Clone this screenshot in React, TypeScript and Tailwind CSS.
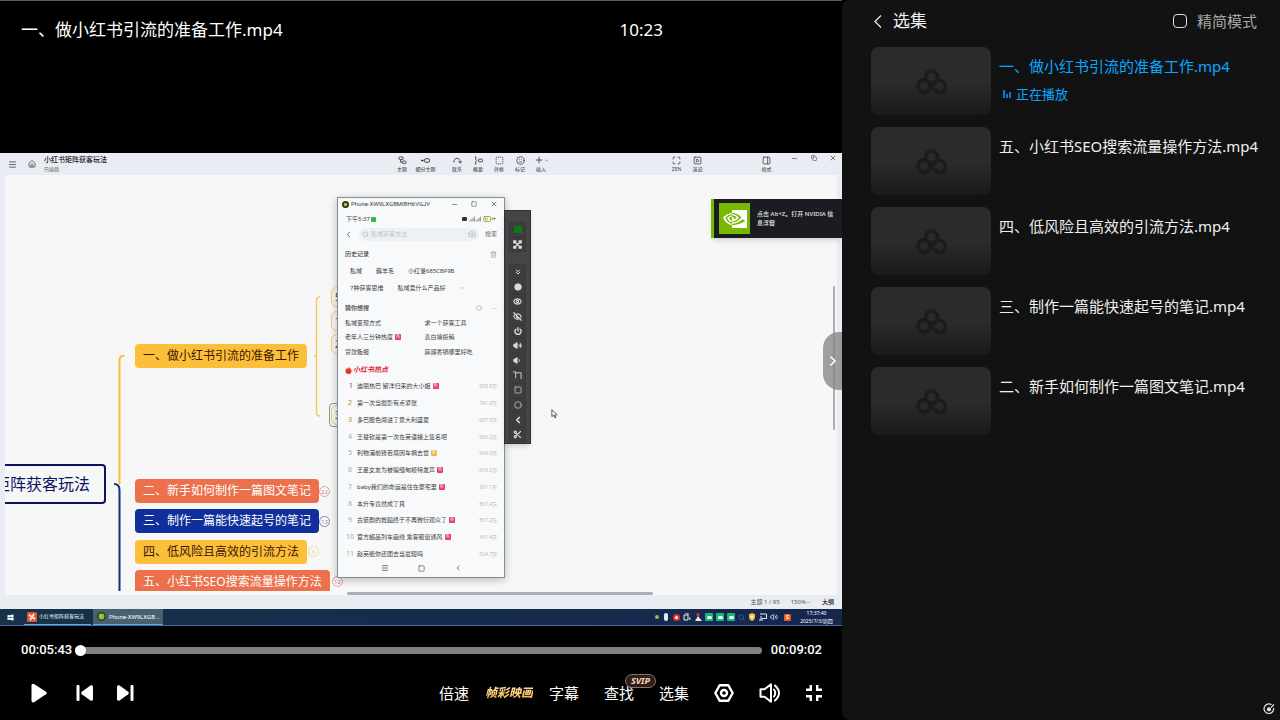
import type { ReactNode } from 'react';
import {
  BatteryMedium,
  Camera,
  ChevronDown,
  ChevronLeft,
  ChevronRight,
  ChevronsDown,
  Circle,
  Copy,
  Eye,
  EyeOff,
  House,
  Maximize,
  Menu,
  Minus,
  PanelRight,
  Plus,
  Power,
  Scissors,
  Search,
  Signal,
  Smile,
  Square,
  SquareDashed,
  SquarePlay,
  Trash2,
  Volume1,
  Volume2,
  X,
} from 'lucide-react';
import { BsNvidia } from 'react-icons/bs';
import { FaWindows } from 'react-icons/fa';

const episodes = [
  '一、做小红书引流的准备工作.mp4',
  '五、小红书SEO搜索流量操作方法.mp4',
  '四、低风险且高效的引流方法.mp4',
  '三、制作一篇能快速起号的笔记.mp4',
  '二、新手如何制作一篇图文笔记.mp4',
];

const hotTopics = [
  { text: '迪丽热巴 留洋归来的大小姐', heat: '958.8万', tag: 'bg-[#e23a63]' },
  { text: '第一次当摄影有点紧张', heat: '741.9万' },
  { text: '多巴胺色闯进了意大利盛夏', heat: '697.5万' },
  { text: '王楚钦是第一次在英语播上签名吧', heat: '660.2万' },
  { text: '利物浦前锋若塔因车祸去世', heat: '643.0万', tag: 'bg-[#edb63c]' },
  { text: '王星女友为被骗缅甸模特发声', heat: '616.0万', tag: 'bg-[#e23a63]' },
  { text: 'baby我们的命运是住在豪宅里', heat: '591.1万', tag: 'bg-[#e23a63]' },
  { text: '本升专竟然成了真', heat: '567.4万' },
  { text: '古装剧的舞蹈终于不再敷衍观众了', heat: '557.2万', tag: 'bg-[#e23a63]' },
  { text: '官方超品列车画线 乘客砸窗通风', heat: '541.4万', tag: 'bg-[#e23a63]' },
  { text: '赵英能你还团去当最短吗', heat: '524.7万' },
];

function CloudLogo() {
  return (
    <svg viewBox="0 0 31 25" className="h-[25px] w-[31px]" fill="none" stroke="#1c1c1c" strokeWidth="3.8" strokeLinecap="round" aria-hidden="true">
      <circle cx="15.5" cy="8.2" r="6" />
      <circle cx="8" cy="17" r="6" />
      <path d="M12 22 L19.2 13.6 A6 6 0 1 1 18.8 21.2" />
    </svg>
  );
}

function ToolButton({ label, icon, wide }: { label: string; icon: ReactNode; wide?: boolean }) {
  return (
    <button type="button" className={`flex flex-col items-center gap-px text-[5px] leading-[7px] ${wide ? 'w-[26px]' : 'w-[21px]'}`}>
      <span className="flex h-[9px] items-center">{icon}</span>
      {label}
    </button>
  );
}

function MindMapHeader() {
  return (
    <header className="flex h-[22px] shrink-0 bg-[#e9ecf2] text-[#33373f]">
      <div className="flex w-[46.5%] items-center">
        <button type="button" aria-label="菜单" className="flex w-6 justify-center"><Menu size={9} /></button>
        <button type="button" aria-label="主页" className="flex w-4 justify-center"><House size={8} /></button>
        <div className="ml-1">
          <h2 className="text-[7px] leading-[10px] font-medium text-[#15171c]">小红书矩阵获客玩法</h2>
          <p className="text-[5px] leading-[9px] text-[#666]">已编辑</p>
        </div>
      </div>
      <div className="flex items-center">
        <ToolButton label="主题" icon={
          <svg viewBox="0 0 10 10" className="size-[9px]" fill="none" stroke="currentColor"><rect x="1" y="1" width="5" height="3" rx="1.5" /><path d="M3 4v3h2" /><rect x="5" y="5.500" width="4" height="3" rx="1.500" /></svg>
        } />
        <ToolButton wide label="细分主题" icon={
          <svg viewBox="0 0 10 10" className="size-[9px]" fill="none" stroke="currentColor"><path d="M0 5h3" strokeWidth="1.600" /><rect x="4" y="3" width="5.500" height="4" rx="1.500" /></svg>
        } />
        <span className="w-2" />
        <ToolButton label="联系" icon={
          <svg viewBox="0 0 10 10" className="size-[9px]" fill="none" stroke="currentColor"><path d="M1 7C1 1 8 1 8 7M6 6l2 2 2-2" /></svg>
        } />
        <ToolButton label="概要" icon={
          <svg viewBox="0 0 10 10" className="size-[9px]" fill="none" stroke="currentColor"><path d="M1 1h1v3l1 1-1 1v3H1" /><rect x="5" y="3.500" width="4.500" height="3" rx="1" /></svg>
        } />
        <ToolButton label="外框" icon={<SquareDashed size={9} />} />
        <ToolButton label="标记" icon={<Smile size={9} />} />
        <ToolButton label="插入" icon={<><Plus size={10} /><ChevronDown size={5} /></>} />
      </div>
      <div className="flex flex-1 items-center justify-end">
        <ToolButton label="ZEN" icon={<Maximize size={9} />} />
        <ToolButton label="演说" icon={<SquarePlay size={9} />} />
        <span className="w-12" />
        <ToolButton label="格式" icon={<PanelRight size={9} />} />
        <span className="w-2" />
        <div className="flex self-start">
          <button type="button" aria-label="最小化" className="flex h-[10px] w-[19px] items-center justify-center"><Minus size={7} /></button>
          <button type="button" aria-label="还原" className="flex h-[10px] w-[19px] items-center justify-center"><Copy size={6} /></button>
          <button type="button" aria-label="关闭" className="flex h-[10px] w-[19px] items-center justify-center"><X size={8} /></button>
        </div>
      </div>
    </header>
  );
}

const node = 'absolute left-[130px] flex h-6 items-center rounded px-2 text-[12px] whitespace-nowrap';
const leaf = 'absolute left-[326px] h-5 w-10 rounded-md border border-[#f0cf66] pl-[3px] text-[10px] leading-[18px] text-[#444]';
const count = 'absolute flex size-[11px] items-center justify-center rounded-full border text-[6px] leading-none';

function MindMap() {
  return (
    <div className="absolute inset-x-0 top-0 bottom-1 overflow-hidden">
      <div className="absolute top-[289px] left-[-75px] flex h-10 w-[176px] items-center justify-center rounded border-2 border-[#0c1460] text-[16px] whitespace-nowrap text-[#0c1460]">
        小红书矩阵获客玩法
      </div>
      <svg className="absolute top-0 left-0" width="340" height="416" fill="none" aria-hidden="true">
        <path d="M119.500 181h-1q-4 0-4 4v124" stroke="#f6bf3f" strokeWidth="2" />
        <path d="M109 309q5.500 0 5.500 6v101" stroke="#123181" strokeWidth="2" />
        <path d="M315 122q-3.500 0-3.500 3v113q0 3 3.500 3M309 181h2.500" stroke="#f6c95c" strokeWidth="1.500" />
      </svg>
      <div className={`${node} top-[169px] bg-[#fbbf3a] text-[#3b1500]`}>一、做小红书引流的准备工作</div>
      <div className={`${node} top-[304px] bg-[#ec704c] text-white`}>二、新手如何制作一篇图文笔记</div>
      <div className={`${node} top-[334px] bg-[#102f9a] text-white`}>三、制作一篇能快速起号的笔记</div>
      <div className={`${node} top-[365px] bg-[#fbbf3a] text-[#3b1500]`}>四、低风险且高效的引流方法</div>
      <div className={`${node} top-[395px] bg-[#ec704c] text-white`}>五、小红书SEO搜索流量操作方法</div>
      <span className={`${count} top-[311px] left-[314px] border-[#dfa39b] text-[#c98a82]`}>22</span>
      <span className={`${count} top-[341px] left-[314px] border-[#7f8bb0] text-[#7f8bb0]`}>13</span>
      <span className={`${count} top-[371px] left-[303px] border-[#f3dc9a] text-[#eccf80]`}>6</span>
      <span className={`${count} top-[401px] left-[327px] border-[#dfa39b] text-[#c98a82]`}>12</span>
      <div className={`${leaf} top-[112px]`}>5</div>
      <div className={`${leaf} top-[136px]`}>1</div>
      <div className={`${leaf} top-[159px]`}>2</div>
      <div className="absolute top-[228px] left-[324px] h-6 w-10 rounded-sm border border-[#8396a3]" />
      <div className={`${leaf} top-[230px]`}>3</div>
    </div>
  );
}

function HotTag({ color }: { color: string }) {
  return <span className={`ml-[2px] flex size-[6px] items-center justify-center rounded-[1px] text-[4px] leading-none text-white ${color}`}>热</span>;
}

function PhoneWindow() {
  return (
    <section className="absolute top-[22px] left-[332px] w-[168px] border border-[#7d8f99] bg-[#f8f9fa] pb-[3px] text-[6px] leading-[8px] text-[#3a3d42] shadow-[0_2px_8px_rgba(0,0,0,0.25)]">
      <div className="flex h-3 items-center pl-1">
        <svg viewBox="0 0 8 8" className="size-[7px]" aria-hidden="true"><circle cx="4" cy="4" r="4" fill="#2b3410" /><circle cx="4" cy="4" r="2" fill="#b7cb3a" /></svg>
        <span className="ml-[2px] flex-1 font-['Roboto',sans-serif] whitespace-nowrap">Phone-XW9LXGBMIBH6VGJV</span>
        <button type="button" aria-label="最小化窗口" className="flex w-[19px] justify-center"><Minus size={7} /></button>
        <button type="button" aria-label="最大化窗口" className="flex w-[19px] justify-center"><Square size={6} /></button>
        <button type="button" aria-label="关闭窗口" className="flex w-[21px] justify-center"><X size={8} /></button>
      </div>
      <div className="flex h-[18px] items-center px-2">
        <span>下午5:37</span>
        <span className="ml-px size-[5px] rounded-[1px] bg-[#37b44a]" />
        <span className="ml-auto h-1 w-[5px] rounded-[1px] bg-[#333]" />
        <Signal size={6} className="ml-[2px]" />
        <Signal size={6} />
        <BatteryMedium size={10} className="ml-[2px] text-[#8a9a20]" />
        <span>+</span>
      </div>
      <div className="flex h-3 items-center pr-[7px] pl-1.5">
        <button type="button" aria-label="返回"><ChevronLeft size={9} /></button>
        <label className="ml-[6px] flex h-[13px] flex-1 items-center rounded-full bg-[#eef1f4] px-[3px] text-[#a9aeb4]">
          <Search size={7} />
          <input type="text" aria-label="搜索内容" placeholder="私域获客方法" className="ml-[2px] min-w-0 flex-1 bg-transparent placeholder:text-[#bfc3c8]" />
          <Camera size={8} />
        </label>
        <button type="button" className="ml-[6px] text-[#666]">搜索</button>
      </div>
      <div className="mt-1.5 flex h-4 items-center justify-between px-[7px] font-medium">
        历史记录<Trash2 size={7} className="text-[#999]" />
      </div>
      <div className="flex h-[17px] items-center gap-[14px] pl-3">
        <span>私域</span><span>薅羊毛</span><span>小红薯685CBF9B</span>
      </div>
      <div className="flex h-[17px] items-center gap-[14px] pl-3">
        <span>7种获客思维</span><span>私域卖什么产品好</span><ChevronDown size={6} className="text-[#999]" />
      </div>
      <div className="mt-1 flex h-4 items-center px-[7px] font-medium">
        <span className="flex-1">猜你想搜</span>
        <Circle size={6} className="text-[#999]" /><span className="ml-[10px] text-[#aaa]">···</span>
      </div>
      <div className="grid h-[43px] grid-cols-2 grid-rows-3 items-center pl-[7px]">
        <span>私域变现方式</span><span>求一个获客工具</span>
        <span className="flex items-center">老年人三分钟热度<HotTag color="bg-[#e23a63]" /></span><span>表白墙投稿</span>
        <span>贷款贩报</span><span>麻辣香锅哪里好吃</span>
      </div>
      <h3 className="mt-[3px] flex h-4 items-center pl-[7px] text-[7px] font-bold text-[#e02a35] italic">
        <svg viewBox="0 0 8 9" className="mr-px h-2 w-[7px]" fill="#e8352c" aria-hidden="true"><path d="M4 0C4 2 7.500 3 7.500 6A3.500 3 0 0 1 .5 6C.5 4 2 3.500 2 2c1 .5 1 1 1.200 2C4 3 4.300 1.500 4 0z" /></svg>
        小红书热点
      </h3>
      <ol className="flex h-[184px] flex-col pr-[7px] pl-2">
        {hotTopics.map((topic, i) => (
          <li key={topic.text} className="flex flex-1 items-center whitespace-nowrap">
            <span className={`w-[11px] text-[7px] ${i === 0 ? 'pl-[3px] text-[#c02848]' : i < 3 ? 'pl-[2px] text-[#b08a20]' : i < 9 ? 'pl-[2px] text-[#a5aaaf]' : 'text-[#a5aaaf]'}`}>{i + 1}</span>
            <span>{topic.text}</span>
            {topic.tag && <HotTag color={topic.tag} />}
            <span className="ml-auto text-[5px] text-[#b5babf]">{topic.heat}</span>
          </li>
        ))}
      </ol>
      <div className="flex h-3 items-center justify-center gap-[29px]">
        <button type="button" aria-label="多任务"><Menu size={8} /></button>
        <button type="button" aria-label="桌面"><Square size={7} /></button>
        <button type="button" aria-label="后退"><ChevronLeft size={8} /></button>
      </div>
    </section>
  );
}

const stripTools: { name: string; icon: ReactNode }[] = [
  { name: '状态', icon: <span className="h-[7px] w-2 bg-[#0a7a12]" /> },
  { name: '全屏', icon: <svg viewBox="0 0 10 10" className="size-[9px]" fill="currentColor" stroke="currentColor" strokeWidth="1.500"><path d="M1 1h2v2H1zM7 1h2v2H7zM1 7h2v2H1zM7 7h2v2H7zM3 3l4 4M7 3L3 7" /></svg> },
  { name: '', icon: null },
  { name: '收起', icon: <ChevronsDown size={8} strokeWidth={3} /> },
  { name: '录制', icon: <Circle size={8} fill="currentColor" /> },
  { name: '显示', icon: <Eye size={9} strokeWidth={3} /> },
  { name: '隐藏', icon: <EyeOff size={9} strokeWidth={3} /> },
  { name: '电源', icon: <Power size={8} strokeWidth={4} /> },
  { name: '音量加', icon: <Volume2 size={9} fill="currentColor" /> },
  { name: '音量减', icon: <Volume1 size={9} fill="currentColor" /> },
  { name: '旋转', icon: <svg viewBox="0 0 10 10" className="size-[9px]" fill="none" stroke="currentColor"><path d="M0 1h3v7M3 2h6v7" /></svg> },
  { name: '任务', icon: <Square size={8} /> },
  { name: '主屏', icon: <Circle size={8} /> },
  { name: '上一步', icon: <ChevronLeft size={10} strokeWidth={4} /> },
  { name: '截图', icon: <Scissors size={9} strokeWidth={3} /> },
];

function PhoneTools() {
  return (
    <div className="absolute top-[35px] left-[499px] flex h-[234px] w-[27px] flex-col border border-[#303033] bg-[#454548] px-1 pt-[11px] pb-px text-[#dcdcdc] shadow-md">
      {stripTools.map((tool) =>
        tool.name ? (
          <button key={tool.name} type="button" aria-label={tool.name} className="flex flex-1 items-center justify-center border border-[#39393b] bg-[#3d3d40]">
            {tool.icon}
          </button>
        ) : (
          <span key="gap" className="flex-1" />
        ),
      )}
    </div>
  );
}

function Taskbar() {
  return (
    <footer className="flex h-[17px] shrink-0 items-stretch border-b border-[#4a6a9a] bg-linear-to-r from-[#15334a] to-[#16264f] text-[5px] text-white">
      <button type="button" aria-label="开始" className="flex w-6 items-center pl-[7px]"><FaWindows size={7} /></button>
      <button type="button" className="flex w-[67px] items-center gap-[2px] border-b border-[#4fb3f0] pl-[3px] whitespace-nowrap">
        <svg viewBox="0 0 10 10" className="size-[10px] shrink-0" aria-hidden="true"><rect width="10" height="10" rx="1.500" fill="#f0502a" /><path d="M2 3l3 2 2-3M5 5l3 2M5 5L3 8" stroke="#fff" strokeWidth="1.600" fill="none" /></svg>
        小红书矩阵获客玩法
      </button>
      <button type="button" className="ml-[2px] flex w-[70px] items-center gap-[3px] border-b border-[#4fb3f0] bg-[#48616f] pl-1 font-['Roboto',sans-serif] text-[6px] whitespace-nowrap">
        <svg viewBox="0 0 10 10" className="size-[9px] shrink-0" aria-hidden="true"><circle cx="5" cy="5" r="5" fill="#2c4315" /><circle cx="5" cy="5" r="3.200" fill="#8cc63f" /></svg>
        Phone-XW9LXGB...
      </button>
      <div className="ml-auto flex items-center gap-[3px]">
        <span className="size-1 rounded-full bg-[#9bbf30]" />
        <span className="mx-[2px] h-2 w-1 rounded-full bg-[#e4e9f0]" />
        <span className="flex size-[7px] items-center justify-center rounded-full bg-[#ee2e24]"><span className="size-[3px] rounded-full bg-white" /></span>
        <svg viewBox="0 0 8 8" className="size-2" fill="none" stroke="#e8edf3"><path d="M2 0h3v2M1 2h4v5H1zM6 5h1v2" /></svg>
        <svg viewBox="0 0 8 8" className="size-2"><circle cx="4" cy="1.500" r="1.500" fill="#e33" /><path d="M1 8l3-5 4 5z" fill="#e8e8e8" /></svg>
        <span className="flex size-2 items-center justify-center rounded-[1px] bg-[#16b877]"><span className="h-[3px] w-[5px] rounded-full bg-white" /></span>
        <span className="flex size-2 items-center justify-center rounded-[1px] bg-[#16b877]"><span className="h-[3px] w-[5px] rounded-full bg-white" /></span>
        <span className="flex size-2 items-center justify-center rounded-[1px] bg-[#16b877]"><span className="h-[3px] w-[5px] rounded-full bg-white" /></span>
        <Search size={7} className="text-[#2d7ac8]" />
        <svg viewBox="0 0 8 8" className="size-2"><path d="M1 1l3-1 3 1v3q0 3-3 4-3-1-3-4z" fill="#f1b23e" /><path d="M4 2v4M2.500 3.500h3" stroke="#fff" /></svg>
        <svg viewBox="0 0 8 8" className="size-2" fill="none" stroke="#e8edf3"><path d="M1 1h6.500v4.500H3M2 3v4M0 7h4" /></svg>
        <Volume2 size={8} />
        <span className="ml-[3px] flex size-[7px] items-center justify-center rounded-[1px] bg-[#ee5a24] text-[6px] leading-none font-bold">S</span>
      </div>
      <div className="flex w-[51px] flex-col items-center justify-center leading-[8px]">
        <span>17:37:40</span>
        <span>2025/7/3/周四</span>
      </div>
    </footer>
  );
}

function VideoFrame() {
  return (
    <div className="relative flex aspect-[842/473] w-full flex-col overflow-hidden bg-[#e9ecf2]">
      <MindMapHeader />
      <div className="relative mx-[5px] flex-1 overflow-hidden rounded-b-sm bg-[#f7f7f7]">
        <MindMap />
        <span className="absolute bottom-0 left-[342px] h-[3px] w-[306px] rounded-full bg-[#a9b0b4]" />
        <span className="absolute top-[111px] right-[2px] h-36 w-[2px] rounded-full bg-[#a9b0b4]" />
        <PhoneWindow />
        <PhoneTools />
        <svg viewBox="0 0 8 11" className="absolute top-[234px] left-[546px] h-[10px] w-[7px]" aria-hidden="true"><path d="M1 .5v8l2-1.700L4.500 10l1-.5L4.300 6.500H7z" fill="#fff" stroke="#333" strokeWidth=".9" /></svg>
      </div>
      <aside className="absolute top-[46px] right-0 flex h-[39px] w-[131px] items-center border-l-[3px] border-[#76b900] bg-[#1b1c22] pl-[5px] text-[6px] leading-[9px] text-[#e4e4e4] shadow-md">
        <span className="flex size-[31px] items-center justify-center bg-[#76b900] text-white"><BsNvidia size={24} /></span>
        <p className="ml-[7px] font-medium whitespace-nowrap">点击 Alt+Z。打开 NVIDIA 信<br />息浮窗</p>
      </aside>
      <div className="flex h-[14px] shrink-0 items-center justify-end gap-[11px] pr-2 text-[6px] text-[#555]">
        <span>主题 1 / 95</span>
        <span className="flex items-center">150%<ChevronDown size={5} /></span>
        <span className="font-medium text-[#222]">大纲</span>
      </div>
      <Taskbar />
      <button type="button" aria-label="收起选集" className="absolute top-[179px] right-0 flex h-[58px] w-[19px] items-center justify-center rounded-l-2xl bg-[#828282]/75 text-white">
        <ChevronRight size={16} strokeWidth={2.5} />
      </button>
    </div>
  );
}

function Controls() {
  return (
    <div className="px-5 pt-4 pb-3">
      <div className="flex h-4 items-center font-['Roboto',sans-serif] text-[13px] font-medium">
        <span className="w-[55px] pl-px">00:05:43</span>
        <input
          type="range"
          aria-label="播放进度"
          min={0}
          max={542}
          defaultValue={0}
          className="h-[7px] min-w-0 flex-1 appearance-none rounded-full bg-[#808080] [&::-webkit-slider-thumb]:size-[11px] [&::-webkit-slider-thumb]:appearance-none [&::-webkit-slider-thumb]:rounded-full [&::-webkit-slider-thumb]:bg-white"
        />
        <span className="w-[60px] text-right">00:09:02</span>
      </div>
      <div className="mt-5 flex h-[30px] items-center justify-between text-[15px]">
        <div className="flex items-center gap-6 pl-[11px]">
          <button type="button" aria-label="播放" className="mr-[5px]">
            <svg viewBox="0 0 16 20" className="h-5 w-4" fill="#fff"><path d="M.5 2.500Q.5 0 3 1L15 8.800Q16.500 10 15 11.200L3 19.200Q.5 20 .5 17.700z" /></svg>
          </button>
          <button type="button" aria-label="上一个">
            <svg viewBox="0 0 17 16" className="h-4 w-[17px]" fill="#fff"><rect x=".5" width="3" height="16" rx="1" /><path d="M14.800.3Q17-.3 17 2v12q0 2.300-2.200 1.700L5.800 9.200Q4.600 8 5.800 6.800z" /></svg>
          </button>
          <button type="button" aria-label="下一个">
            <svg viewBox="0 0 17 16" className="h-4 w-[17px]" fill="#fff"><rect x="13.500" width="3" height="16" rx="1" /><path d="M2.200.3Q0-.3 0 2v12q0 2.300 2.200 1.700L11.200 9.200Q12.400 8 11.200 6.800z" /></svg>
          </button>
        </div>
        <div className="flex items-center gap-[25px]">
          <div className="flex items-center gap-4">
            <button type="button">倍速</button>
            <button type="button" className="bg-linear-to-b from-[#ffe9b0] to-[#f2a42a] bg-clip-text text-[12px] font-black text-transparent italic">帧彩映画</button>
            <button type="button">字幕</button>
          </div>
          <button type="button" className="relative">
            查找
            <span className="absolute -top-2 left-[21px] flex h-[14px] w-[31px] items-center justify-center rounded-full border border-[#94705c] bg-[#2c1e1c] text-[9px] leading-none font-bold text-[#fbdcb8] italic">SVIP</span>
          </button>
          <button type="button">选集</button>
          <button type="button" aria-label="设置">
            <svg viewBox="0 0 20 18" className="h-[18px] w-5" fill="none" stroke="#fff" strokeWidth="2.400" strokeLinejoin="round"><path d="M5.800 1.200h8.400L18.700 9l-4.500 7.800H5.800L1.300 9z" /><circle cx="10" cy="9" r="3" /></svg>
          </button>
          <button type="button" aria-label="音量">
            <svg viewBox="0 0 22 20" className="h-5 w-[22px]" fill="none" stroke="#fff" strokeWidth="2" strokeLinejoin="round" strokeLinecap="round"><path d="M1.500 6.300h4L12 1.300v17.400l-6.500-5h-4z" /><path d="M15 6.500q2.500 3.500 0 7M16 2.500q8 7.500 0 15" /></svg>
          </button>
          <button type="button" aria-label="退出全屏">
            <svg viewBox="0 0 16 16" className="size-4" fill="none" stroke="#fff" strokeWidth="2.400"><path d="M4.800 0v4.800H0M11.200 0v4.800H16M4.800 16v-4.800H0M11.200 16v-4.800H16" /></svg>
          </button>
        </div>
      </div>
    </div>
  );
}

function EpisodePanel() {
  return (
    <aside className="relative w-[438px] shrink-0 rounded-l-lg bg-[#121212] pr-[23px] pl-[29px]">
      <header className="flex h-[47px] items-center pb-[5px]">
        <button type="button" aria-label="返回" className="flex w-[22px] items-center">
          <svg viewBox="0 0 14 16" className="h-4 w-[14px]" fill="none" stroke="#e6e6e6" strokeWidth="1.300"><path d="M10 2.500L4 8.500l6 6" /></svg>
        </button>
        <h2 className="flex-1 text-[17px] text-[#f0f0f0]">选集</h2>
        <label className="flex items-center gap-[10px] text-[15px] text-[#a8a8a8]">
          <input type="checkbox" className="size-[14px] appearance-none rounded border border-[#e0e0e0] checked:bg-[#06a7ff]" />
          精简模式
        </label>
      </header>
      <ul className="flex flex-col gap-3">
        {episodes.map((title, i) => (
          <li key={title}>
            <a href={`#episode-${i + 1}`} className={`flex gap-2 text-[15px] leading-5 ${i === 0 ? 'text-[#08a8ff]' : 'text-[#f0f0f0]'}`}>
              <span className="flex h-[68px] w-[120px] shrink-0 items-center justify-center rounded-lg bg-linear-to-b from-[#2b2b2b] from-50% to-[#1a1a1a]">
                <CloudLogo />
              </span>
              <span className="pt-[9px] whitespace-nowrap">
                {title}
                {i === 0 && (
                  <span className="mt-2 flex items-center gap-[5px] pl-1 text-[13px]">
                    <svg viewBox="0 0 8 8" className="size-2" fill="#0878d4" aria-hidden="true"><path d="M0 0h2v8H0zM3 4h2v4H3zM6 2h2v6H6z" /></svg>
                    正在播放
                  </span>
                )}
              </span>
            </a>
          </li>
        ))}
      </ul>
      <span className="absolute right-[5px] bottom-[5px]">
        <svg viewBox="0 0 12 12" className="size-3" fill="none" stroke="#e6e6e6" strokeWidth="1.200" aria-hidden="true"><path d="M8.500 1.700A4.800 4.800 0 1 0 10.600 5" /><circle cx="6" cy="6.300" r="1.500" fill="#e6e6e6" /><path d="M8 4.500L11 1.500" /></svg>
      </span>
    </aside>
  );
}

export default function App() {
  return (
    <div className="flex min-h-screen bg-black font-['Noto_Sans','Noto_Sans_CJK_SC',sans-serif] text-white">
      <main className="flex min-w-0 flex-1 flex-col">
        <header className="flex h-[153px] items-start justify-between border-t border-[#5a5a5a] pt-[17px] pr-[179px] pl-[21px] text-[17px] leading-6">
          <h1>一、做小红书引流的准备工作.mp4</h1>
          <time>10:23</time>
        </header>
        <VideoFrame />
        <Controls />
      </main>
      <EpisodePanel />
    </div>
  );
}
